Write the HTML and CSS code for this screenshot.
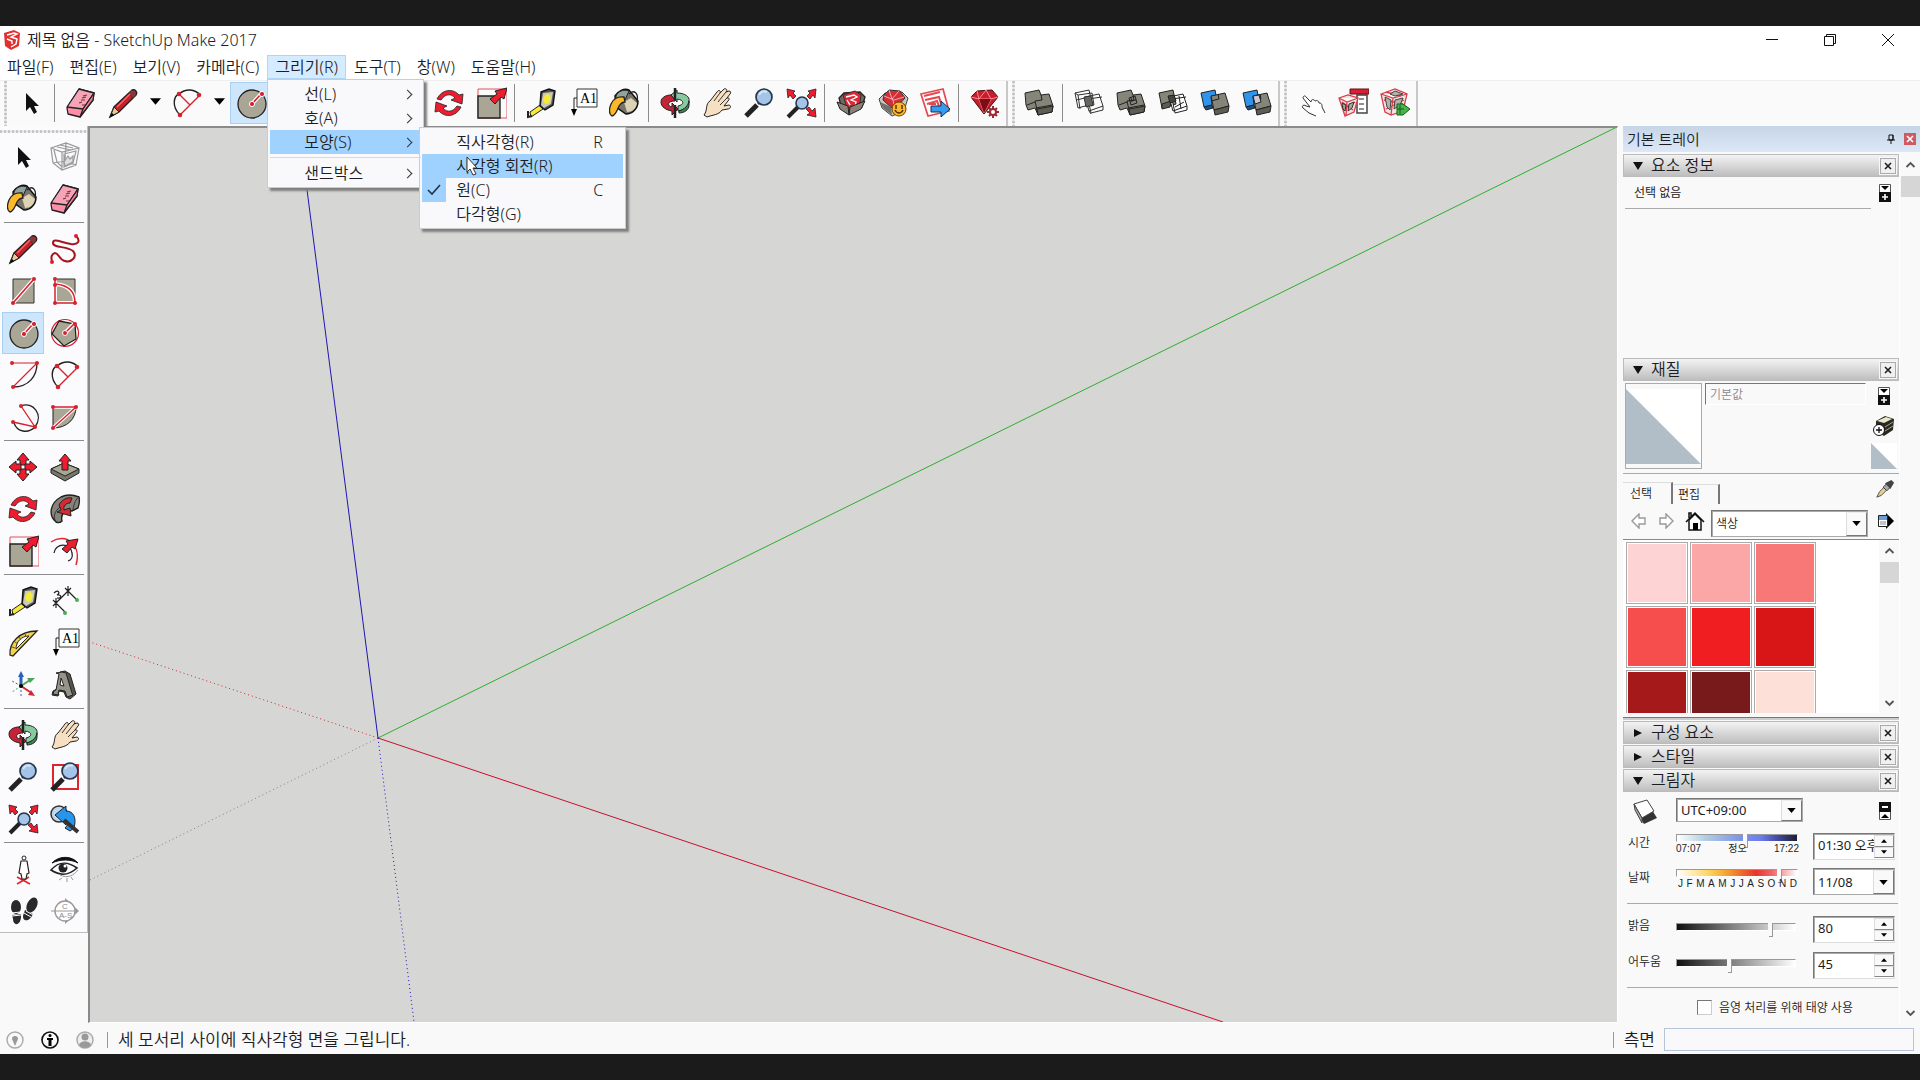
FILE: index.html
```html
<!DOCTYPE html>
<html lang="ko">
<head>
    <meta charset="UTF-8">
    <meta name="viewport" content="width=device-width, initial-scale=1.0">
    <title>제목 없음 - SketchUp Make 2017</title>
    <link rel="stylesheet" href="styles.css">
</head>
<body>
    <!-- Icon set -->
    <svg class="sprite" aria-hidden="true">
        <symbol id="select" viewBox="0 0 32 32"><path d="M11 6v18l4-4 4 7 3-2-3-6h5z" fill="#111"/></symbol>
        <symbol id="component" viewBox="0 0 32 32"><g fill="none" stroke="#999" stroke-width="1.2"><path d="M2 7 17 2l13 5-3 17-14 5-9-7zM2 7l11 4 17-4M13 11v18M5 9l3 12 5 5M17 2l-1 18 11 4M4 22l12-2M8 6l14 3M11 4l13 3M15 13l12-3-3 12-9 4z"/><path d="m15 21 4-6 2 3 3-3v6l-8 4z" fill="#ddd"/></g></symbol>
        <symbol id="bucket" viewBox="0 0 32 32"><path d="M6 9c3-5 9-8 14-6l9 11c0 8-6 13-12 13L7 20z" fill="#77746a" stroke="#111" stroke-width="1.5"/><path d="m15 15 7-4 6 5c-1 6-5 9-10 9z" fill="#ddd3b4"/><path d="M7 9c2-5 8-7 13-5l-4 9-9 4z" fill="#8fa3a0" stroke="#222"/><path d="M20 7c5-5 10-1 8 8" fill="none" stroke="#222" stroke-width="1.3"/><path d="M15 10C9 9 4 12 2 17c-2 5-2 10 1 12 4-1 5-6 7-10 2-3 4-4 6-4z" fill="#fbb829" stroke="#222" stroke-width="1.3"/></symbol>
        <symbol id="eraser" viewBox="0 0 32 32"><g stroke="#222" stroke-width="1.3" stroke-linejoin="round"><path d="m2 21 12-19 15 4-1 7-13 17-12-3z" fill="#ff8fa8"/><path d="m14 2 15 4-11 16L2 20z" fill="#f7a3b8"/><path d="m18 22-3 8 13-17 1-7z" fill="#ff7f98"/></g><path d="m14 16 3-1m-1-2 4 0m-3-2 4-1m-3-1 4-1m-5 10 3 0" stroke="#733" stroke-width="1.2"/></symbol>
        <symbol id="pencil" viewBox="0 0 32 32"><path d="M25 3c3-1 6 2 4 5L12 25l-9 5 4-10z" fill="#c3222c" stroke="#222" stroke-width="1.4"/><path d="m22 6 4 5M7 20l5 5-9 5z" fill="#e8c795" stroke="#222"/><path d="m25 3 4 5-3 3-4-5z" fill="#7d3b3b"/><path d="m10 20 13-13" stroke="#f56b6b" stroke-width="1.5"/><path d="m3 30 2-4 2 2z"/></symbol>
        <symbol id="freehand" viewBox="0 0 32 32"><path d="M27 3c5 5 2 9-5 8C11 9 4 5 4 10s14 3 20 8c5 6-2 12-8 10-6-1-6-8-10-8-4 1-4 5-3 8" fill="none" stroke="#a4151e" stroke-width="2"/><g fill="#dc1f2b"><circle cx="27" cy="3" r="2"/><circle cx="3" cy="29" r="2"/></g></symbol>
        <symbol id="rect" viewBox="0 0 32 32"><path d="M6 4h21v24H6z" fill="#a9a695" stroke="#333"/><path d="M6 28 27 4" stroke="#fff" stroke-width="4"/><path d="M6 28 27 4" stroke="#d4222e" stroke-width="1.6"/><circle cx="6" cy="28" r="2" fill="#d4222e"/><circle cx="27" cy="4" r="2" fill="#d4222e"/></symbol>
        <symbol id="rotrect" viewBox="0 0 32 32"><path d="M6 4h20v24H6z" fill="#a9a695" stroke="#333"/><path d="M6 9c14 1 20 8 20 19H6V4" fill="none" stroke="#fff" stroke-width="4"/><path d="M6 9c14 1 20 8 20 19H6V4" fill="none" stroke="#d4222e" stroke-width="1.5"/><g fill="#d4222e"><circle cx="6" cy="4" r="2"/><circle cx="6" cy="10" r="2"/><circle cx="6" cy="28" r="2"/><circle cx="26" cy="28" r="2"/></g></symbol>
        <symbol id="circle" viewBox="0 0 32 32"><circle cx="17" cy="17" r="14" fill="#a9a695" stroke="#222" stroke-width="1.3"/><path d="m17 17 9-10" stroke="#fff" stroke-width="4"/><path d="m17 17 9-10" stroke="#d4222e" stroke-width="1.6"/><circle cx="17" cy="17" r="2.600" fill="#d4222e" stroke="#fff"/><circle cx="27" cy="7" r="2.600" fill="#d4222e" stroke="#fff"/></symbol>
        <symbol id="polygon" viewBox="0 0 32 32"><circle cx="16" cy="16" r="13.500" fill="#fff" stroke="#d4222e" stroke-width="1.2"/><path d="M10 4 26 7l1 15-12 7L3 17z" fill="#a9a695" stroke="#222" stroke-width="1.3"/><path d="m16 16 9-9" stroke="#fff" stroke-width="4"/><path d="m16 16 9-9" stroke="#d4222e" stroke-width="1.6"/><circle cx="16" cy="16" r="2.500" fill="#d4222e" stroke="#fff"/><circle cx="26" cy="7" r="2" fill="#d4222e"/></symbol>
        <symbol id="arc2" viewBox="0 0 32 32"><path d="M30 4c0 13-8 24-24 24" fill="none" stroke="#222" stroke-width="1.3"/><path d="M5 4h25L6 28" fill="none" stroke="#d4222e" stroke-width="1.2"/><g fill="#d4222e"><circle cx="5" cy="4" r="2"/><circle cx="30" cy="4" r="2"/><circle cx="6" cy="28" r="2"/></g></symbol>
        <symbol id="arc" viewBox="0 0 32 32"><path d="M9 28C0 19 3 9 8 7c7-6 16-5 21 1" fill="none" stroke="#222" stroke-width="1.4"/><path d="m9 28 20-20M8 7l11 11" fill="none" stroke="#d4222e" stroke-width="1.4"/><g fill="#d4222e"><circle cx="9" cy="28" r="2.300"/><circle cx="8" cy="7" r="2.300"/><circle cx="28" cy="8" r="2.300"/></g></symbol>
        <symbol id="arc3" viewBox="0 0 32 32"><path d="M14 5c12-5 23 9 14 21-7 7-18 5-21-4" fill="none" stroke="#222" stroke-width="1.3"/><path d="m14 5 14 21L6 21" fill="none" stroke="#d4222e" stroke-width="1.3"/><g fill="#d4222e"><circle cx="14" cy="5" r="2"/><circle cx="28" cy="26" r="2"/><circle cx="6" cy="21" r="2"/></g></symbol>
        <symbol id="pie" viewBox="0 0 32 32"><path d="M4 6h23c0 12-9 21-23 21z" fill="#a9a695" stroke="#222"/><path d="M4 6h23L4 27" fill="none" stroke="#fff" stroke-width="3.500"/><path d="M4 6h23L4 27" fill="none" stroke="#d4222e" stroke-width="1.4"/><g fill="#d4222e"><circle cx="4" cy="6" r="2"/><circle cx="27" cy="6" r="2"/><circle cx="4" cy="27" r="2"/></g></symbol>
        <symbol id="move" viewBox="0 0 32 32"><path id="up" d="m16 2 6 7h-3v5h-6V9h-3z" fill="#ed1c2e" stroke="#222" stroke-width="1"/><use href="#up" transform="rotate(90 16 16)"/><use href="#up" transform="rotate(180 16 16)"/><use href="#up" transform="rotate(270 16 16)"/></symbol>
        <symbol id="pushpull" viewBox="0 0 32 32"><path d="m2 18 13-6 15 6v4l-14 8-14-8z" fill="#77766b" stroke="#222"/><path d="m2 18 14 7 14-7-15-6z" fill="#a9a695" stroke="#222"/><path d="m16 3 6 7h-3v9h-6v-9h-3z" fill="#ed1c2e" stroke="#222"/></symbol>
        <symbol id="rotate" viewBox="0 0 32 32"><g id="rot" fill="#ed1c2e" stroke="#222" stroke-width=".8"><path d="M4 12C9 2 20 1 26 8l4-1-1 10-11-4 4-2c-4-5-10-4-14 2z"/></g><use href="#rot" transform="rotate(180 16 16)"/></symbol>
        <symbol id="followme" viewBox="0 0 32 32"><path d="M7 29C-1 22 1 10 12 4c6-3 13-2 18 0 1 4 0 8-1 11l-6 3C17 17 11 20 13 28c-2 2-4 2-6 1z" fill="#85837a" stroke="#222" stroke-width="1.4"/><path d="M7 29c-3-5-2-10 4-15M30 4c-3 2-5 6-6 13" fill="none" stroke="#333"/><path d="M10 12C13 6 19 4 23 5l-2 5c-4 0-7 3-6 7l6-2 1 8-14-4 4-2z" fill="#d42a30" stroke="#222"/></symbol>
        <symbol id="scale" viewBox="0 0 32 32"><path d="M3 2h29v29H3z" fill="none" stroke="#e0525c"/><path d="M3 9h22v22H3z" fill="#a9a695" stroke="#222" stroke-width="1.4"/><path d="m32 1-3 11-3-2-6 7-5-5 7-5-2-3z" fill="#ed1c2e" stroke="#222"/></symbol>
        <symbol id="offset" viewBox="0 0 32 32"><path d="M2 7c15-10 31 3 25 23" fill="none" stroke="#e2242d" stroke-width="1.5"/><path d="M5 18c1-10 17-11 18 0 1 4-1 7-4 8" fill="none" stroke="#222" stroke-width="1.3"/><path d="m29 4-3 10-3-2-5 6-5-4 6-5-2-3z" fill="#ed1c2e" stroke="#222"/></symbol>
        <symbol id="tape" viewBox="0 0 32 32"><path d="m5 25 10-7 3 4L6 30z" fill="#f6e83b" stroke="#222"/><path d="M3 24v6l4-1" stroke="#222" stroke-width="2" fill="none"/><path d="m16 5 8-3 6 2-2 14-8 5-5-4z" fill="#555" stroke="#111" stroke-width="1.4"/><path d="m18 6 10-1-2 12-7 4-3-3z" fill="#c9c9be"/><ellipse cx="22" cy="12" rx="3.500" ry="5" fill="#f4ec35" transform="rotate(15 22 12)"/></symbol>
        <symbol id="dimension" viewBox="0 0 32 32"><path d="M7 18 19 6M7 18l9 9M19 6l9 9M4 15l6 6m-6 0 6-6m-3-2v10M16 3l6 6m-6 0 6-6m-3-2v10M5 8c4-4 7 0 3 2 5-1 5 4 0 3" fill="none" stroke="#222" stroke-width="1.2"/><circle cx="16" cy="28" r="2" fill="#4cab59"/><circle cx="28" cy="15" r="2" fill="#4cab59"/></symbol>
        <symbol id="protractor" viewBox="0 0 32 32"><path d="M3 28C2 16 12 4 30 4L6 29z" fill="#f0d351" stroke="#222" stroke-width="1.3"/><path d="M9 22c0-7 5-13 13-13z" fill="#fff" stroke="#222"/><path d="m5 20 3 1m0-6 3 2m1-7 2 3m4-6 1 3" stroke="#6f5b12"/></symbol>
        <symbol id="axes" viewBox="0 0 32 32"><path d="M14 17V7" stroke="#2b62b5" stroke-width="3"/><path d="m14 2 3 6h-6z" fill="#2b62b5"/><path d="m14 17 9-6" stroke="#4fa45b" stroke-width="2"/><path d="m28 9-5 5-3-5z" fill="#4fa45b"/><path d="m14 17 9 6" stroke="#cf2a30" stroke-width="2"/><path d="m28 27-7-1 3-5z" fill="#cf2a30"/><path d="m14 17-9-5" stroke="#cf2a30" stroke-dasharray="2"/><path d="M14 17v11" stroke="#2b62b5" stroke-dasharray="2"/><path d="m14 17-9 6" stroke="#4fa45b" stroke-dasharray="2"/><circle cx="14" cy="17" r="2"/></symbol>
        <symbol id="text3d" viewBox="0 0 32 32"><path d="m11 3 5-1 5 3 6 20-6 5-4-2-2-5-5-1-1 5-6-1 1-4 4-2z" fill="#55554e" stroke="#222"/><path d="m7 4 6-1 4 1 6 20 1 2-6 2-2-6-6-1-1 3 1 2-6-1 1-3 2-1 3-16z" fill="#95938a" stroke="#222"/><path d="m12 9-1 7 4 1z" fill="#fafafa" stroke="#222"/></symbol>
        <symbol id="orbit" viewBox="0 0 32 32"><g stroke="#222" stroke-width="1"><path d="M17 8C8 7 2 10 2 15c0 5 5 8 11 9v4l6-6-6-6v4c-5-1-5-6 3-6z" fill="#c52436"/><path d="M12 8 18 3v3c8 0 13 4 12 8 0 6-5 9-11 10v-5c6-1 7-6-1-7v3z" fill="#87caa0"/><path d="m30 14v4c0 5-5 8-10 8v-2c6-2 9-5 10-10z" fill="#3b8653"/></g><path d="M16 1v12m0 5v13" stroke="#222" stroke-width="2.500"/></symbol>
        <symbol id="pan" viewBox="0 0 32 32"><path d="M3 28c4-5 1-11 6-14l7-9c2-3 4-1 3 1l4-4c2-1 4 1 2 3l3-1c2 0 2 2 1 3l-3 4c2-1 3 1 1 3l-4 5 5-1c3 1 1 4-1 4l-6 1c-3 5-10 5-15 7z" fill="#f7dfc1" stroke="#222" stroke-width="1"/><path d="m19 6-6 8m12-9-8 10m10-5-8 8" stroke="#222" stroke-width=".9"/></symbol>
        <symbol id="zoom" viewBox="0 0 32 32"><path d="M3 29 14 18" stroke="#222" stroke-width="5"/><path d="m15 17 3-3" stroke="#333" stroke-width="2.500"/><circle cx="21" cy="10" r="8" fill="#a4c4e8" stroke="#27364d" stroke-width="1.7"/><path d="M16 8c2-4 6-4 8-3" stroke="#d5e5f5" fill="none" stroke-width="2"/></symbol>
        <symbol id="zoomwin" viewBox="0 0 32 32"><path d="M4 4h25v24H4z" fill="none" stroke="#dd2530" stroke-width="2"/><use href="#zoom"/></symbol>
        <symbol id="extents" viewBox="0 0 32 32"><path d="M3 30 13 20" stroke="#222" stroke-width="4"/><circle cx="17" cy="16" r="6" fill="#a4c4e8" stroke="#27364d" stroke-width="1.6"/><path d="m2 2 8 2-2 2 3 3-3 3-3-4-2 3zM31 2l-8 2 2 2-3 3 3 3 3-4 2 3zM31 30l-9-2 3-2-4-4 3-2 3 4 3-3z" fill="#ed1c2e" stroke="#222" stroke-width=".8"/></symbol>
        <symbol id="previous" viewBox="0 0 32 32"><circle cx="10" cy="11" r="8" fill="#c1d7ed" stroke="#333" stroke-width="1.5"/><path d="m6 12 11-9v5c7 0 11 6 8 17l-4 3-5-3c3-3 4-6 1-8v5z" fill="#2695ee" stroke="#222"/><path d="m15 17 14 12" stroke="#333" stroke-width="4"/></symbol>
        <symbol id="camera" viewBox="0 0 32 32"><path d="m10 24 13 7m-13 0 12-7" stroke="#e2242d" stroke-width="1.5"/><circle cx="17" cy="5" r="2" fill="#fff" stroke="#222"/><path d="M14 8h6l2 12-2 1-1 5h-4l-1-5-2-1z" fill="#fff" stroke="#222" stroke-width="1.2"/></symbol>
        <symbol id="look" viewBox="0 0 32 32"><path d="M3 10C11 2 23 3 29 10 22 6 11 6 3 10z" fill="#111" stroke="#111"/><path d="M2 17c8-9 16-9 26-2-10 9-18 7-26 2z" fill="#fff" stroke="#222" stroke-width="1.6"/><circle cx="14" cy="15" r="4.500" fill="#222"/><circle cx="16" cy="13" r="1.500" fill="#fff"/><path d="M11 22c8 4 14 0 18-5m-16 8-3 2m8-2v4m4-5 2 3" stroke="#999" fill="none"/></symbol>
        <symbol id="walk" viewBox="0 0 32 32"><g fill="#292929"><ellipse cx="9" cy="12" rx="5" ry="7"/><path d="m5 20 9-1c1 12-8 13-8 5z"/><ellipse cx="25" cy="10" rx="5" ry="8" transform="rotate(25 25 10)"/><path d="m18 15 8 4c-4 10-13 7-9-1z"/></g><path d="m4 18 10-1m-9 4 9-1m5-4 7 4m-9-2 7 4" stroke="#fff" stroke-width="1"/></symbol>
        <symbol id="warehouse" viewBox="0 0 32 32"><path d="m4 11 5-5 16-1 5 5-3 10-12 6-9-7z" fill="#716963" stroke="#222" stroke-width="1.3"/><path d="m8 8 12-4 6 4-2 14-11 3z" fill="#df2834" stroke="#333"/><path d="m11 10 8-2 3 2-6 3 5 2-1 5-5 1m-3-8 3 5" fill="none" stroke="#fff" stroke-width="1.3"/><path d="m2 15 11 4 1 9-9-6zM30 14l-15 6-1 8 12-6z" fill="#8b8179" stroke="#222"/></symbol>
        <symbol id="extension" viewBox="0 0 32 32"><path d="m2 12 6-6 17-1 6 6-4 13-12 5-10-8z" fill="#c9c5c0" stroke="#444"/><path d="m7 8 5-5 11 1 5 7-11 12-11-10z" fill="#d52d35" stroke="#333"/><path d="m7 9 10 4 10-3M12 3l3 9 7-8m-6 9 2 10" stroke="#fff" fill="none" opacity=".6"/><path d="m3 15 11 5 1 8-9-7z" fill="#72706d"/><circle cx="22" cy="22" r="7" fill="#ffb729" stroke="#6b4306"/><path d="M19 18v4m6-4v4m-7 1c2 4 6 4 8 0" fill="none" stroke="#53360b" stroke-width="1.5"/></symbol>
        <symbol id="layout" viewBox="0 0 32 32"><path d="m2 7 22-5 6 22-21 5z" fill="#fff" stroke="#e64852" stroke-width="1.7"/><path d="m5 9 16-4m-15 8 14-3 4 13m-16-6 10-3 3 8m-11-5 7 0" fill="none" stroke="#e64852" stroke-width="2"/><path d="M12 19h10v-5l9 8-9 8v-5H12z" fill="#359cf0" stroke="#14304e"/></symbol>
        <symbol id="ruby" viewBox="0 0 32 32"><path d="m2 10 6-6 15-1 6 7-14 17z" fill="#c81e2c" stroke="#401015"/><path d="m2 10 8 2 7-9 5 9 7-2M10 12l5 14 7-14zM8 4l2 8" fill="none" stroke="#ff8d92"/><path d="m10 12 5 14 7-14z" fill="#7c0d17"/><path d="M24 19v12m-6-6h12m-10-4 8 8m0-8-8 8" stroke="#9c2830" stroke-width="2"/><circle cx="24" cy="25" r="4" fill="#9c2830"/><circle cx="24" cy="25" r="2" fill="#fff"/></symbol>
        <!-- two overlapping solids -->
        <symbol id="shell" viewBox="0 0 32 32"><g stroke="#222" stroke-width="1" fill="#85857a"><path d="m2 6 14-3 2 5 8-1 4 12-1 6-14 3-3-7-7 2-2-5z"/><path d="m12 14 7-1-1-5m-6 6 2 9m-1-2 16-3m-25 0 8-3M15 28l-1-6" fill="none"/><path d="m14 22 16-3-1 6-14 3z" fill="#5d5d54"/></g></symbol>
        <symbol id="intersect" viewBox="0 0 32 32"><g stroke="#333" fill="none"><path d="m2 6 14-3 3 14-14 4zm0 0 3 2 14-2 2 12-3 1M5 8l2 14M3 13l14-3M12 10l14-3 4 12-14 5zm0 0 3 2 14-2M15 12l3 14 12-3v-4M16 24l2 3"/><path d="m11 10 7-1 2 9-7 2z" fill="#66665f"/></g></symbol>
        <symbol id="union" viewBox="0 0 32 32"><use href="#shell"/><path d="m14 11 6-2 2 7-6 2zm2 0 1 4m-2-1 6-1" fill="none" stroke="#222"/></symbol>
        <symbol id="subtract" viewBox="0 0 32 32"><g stroke="#222" fill="#85857a"><path d="m2 6 14-3 3 14-14 4z"/><path d="m5 17 9-3-1 6-8 2z" fill="#5d5d54"/><path d="m12 10 14-3 4 12-14 5zm0 0 3 2 14-2M15 12l3 14 12-3v-4M18 20l9-5M22 9l2 13" fill="#fff"/><path d="m11 9 6-1 2 6-6 2z" fill="#44443e"/></g></symbol>
        <symbol id="trim" viewBox="0 0 32 32"><g stroke="#222"><path d="m2 6 14-3 1 5-5 2 1 8-8 2z" fill="#2f94ee"/><path d="m5 20 8-2 1 3-7 2z" fill="#13538e"/><path d="m12 9 14-3 4 13-15 4z" fill="#85857a"/><path d="m15 23 15-4-1 6-13 3z" fill="#5d5d54"/><path d="m12 14 8-2-1-5" fill="none"/></g></symbol>
        <symbol id="split" viewBox="0 0 32 32"><use href="#trim"/><path d="m12 9 6-1 2 7-6 2z" fill="#ccc9d4" stroke="#222"/></symbol>
        <symbol id="interact" viewBox="0 0 32 32"><path d="m21 29-7-3-6-5c-2-2 1-4 3-2l4 1-7-9c0-2 2-3 3-1l5 5c0-3 3-3 4-1 2-1 4 0 4 2 3 0 3 2 3 4l3 6" fill="#fff" stroke="#333"/></symbol>
        <symbol id="options" viewBox="0 0 32 32"><path d="M20 8h10v18H20z" fill="#fff" stroke="#444" stroke-width="1.5"/><path d="M13 2h19v5H13z" fill="#d71f35" stroke="#661019"/><path d="M22 12h5m-5 5h5m-5 5h5" stroke="#222"/><g fill="#f1e5e2" stroke="#db3c49" stroke-width="1.3"><path d="m2 11 9-3 10 3-4 14-9 4zM2 11l8 4 11-4M10 15l-1 13M5 15l11 8m-10 0 12-8"/></g><path d="m5 16 4 2-1 6-2-2zm7 1 5-2-2 6-4 3z" fill="#aaa29d" stroke="#333"/></symbol>
        <symbol id="attributes" viewBox="0 0 32 32"><g fill="#f1e5e2" stroke="#db3c49" stroke-width="1.3"><path d="m2 7 14-5 12 5-4 17-12 4-6-3zM2 7l12 4 14-4M14 11l-2 17M5 13l19 4M7 22l18-9M7 5l15 4"/></g><path d="m6 10 6 3-1 10-3-3zm10-6 8 3-8 2-5-2zM16 13l8-2-3 7-6 4z" fill="#b8b1ab" stroke="#444"/><path d="M18 17h6l7 5-7 6h-6z" fill="#45b648" stroke="#1b5821"/><path d="M18 22h7m-4-4v9" stroke="#1b5821"/></symbol>
        <symbol id="details" viewBox="0 0 12 18"><path d="M.5.500h11v17H.500z" fill="#fff" stroke="#555"/><path d="M2 2h8L6 6z"/><path d="M0 8h12v10H0z" fill="#111"/><path d="M3 13h6M6 10v6" stroke="#fff" stroke-width="1.6"/></symbol>
        <symbol id="x" viewBox="0 0 10 10"><path d="m2 2 6 6M8 2 2 8" stroke="currentColor" stroke-width="1.6"/></symbol>
        <symbol id="down" viewBox="0 0 10 6"><path d="M0 0h10L5 6z"/></symbol>
        <symbol id="chev" viewBox="0 0 10 10"><path d="m1 7 4-4 4 4" fill="none" stroke="#555" stroke-width="1.8"/></symbol>
    </svg>

    <div class="app">
        <header class="titlebar">
            <svg class="logo" viewBox="0 0 18 20"><path d="m1 3 10-3 6 3-1 13-8 4-6-4z" fill="#e0302f"/><path d="m4 5 7-2 3 1-6 3 6 2-1 5-5 3M4 9l5 2v3" fill="none" stroke="#fff" stroke-width="1.4"/></svg>
            <h1>제목 없음 - SketchUp Make 2017</h1>
            <div class="window-buttons">
                <button aria-label="최소화"><svg viewBox="0 0 12 12"><path d="M0 5.500h12" stroke="#111"/></svg></button>
                <button aria-label="복원"><svg viewBox="0 0 12 12"><path d="M.5 2.500h9v9h-9zM2.500 2.500v-2h9v9h-2" fill="none" stroke="#111"/></svg></button>
                <button aria-label="닫기"><svg viewBox="0 0 12 12"><path d="m0 0 12 12M12 0 0 12" stroke="#111"/></svg></button>
            </div>
        </header>

        <nav class="menubar">
            <button>파일(F)</button>
            <button>편집(E)</button>
            <button>보기(V)</button>
            <button>카메라(C)</button>
            <div class="menu-open">
                <button class="active">그리기(R)</button>
                <ul class="menu">
                    <li><button>선(L)<i class="more"></i></button></li>
                    <li><button>호(A)<i class="more"></i></button></li>
                    <li>
                        <button class="active">모양(S)<i class="more"></i></button>
                        <ul class="menu submenu">
                            <li><button>직사각형(R)<kbd>R</kbd></button></li>
                            <li><button class="active">사각형 회전(R)</button></li>
                            <li><button class="checked"><svg class="check" viewBox="0 0 24 24"><path d="m6 12 4 4 8-9" fill="none" stroke="#234" stroke-width="1.6"/></svg>원(C)<kbd>C</kbd></button></li>
                            <li><button>다각형(G)</button></li>
                        </ul>
                    </li>
                    <li class="divider"><button>샌드박스<i class="more"></i></button></li>
                </ul>
                <svg class="pointer" viewBox="0 0 12 20"><path d="M1 1v15l3-3 3 6 3-1-3-6h4z" fill="#fff" stroke="#333"/></svg>
            </div>
            <button>도구(T)</button>
            <button>창(W)</button>
            <button>도움말(H)</button>
        </nav>

        <div class="toolbars">
            <div class="toolbar">
                <button class="tool" aria-label="선택"><svg><use href="#select"/></svg></button>
                <hr>
                <button class="tool" aria-label="지우기"><svg><use href="#eraser"/></svg></button>
                <button class="tool" aria-label="선"><svg><use href="#pencil"/></svg></button>
                <button class="drop" aria-label="선 도구"><svg><use href="#down"/></svg></button>
                <button class="tool" aria-label="호"><svg><use href="#arc"/></svg></button>
                <button class="drop" aria-label="호 도구"><svg><use href="#down"/></svg></button>
                <button class="tool on" aria-label="원"><svg><use href="#circle"/></svg></button>
                <button class="drop" aria-label="모양 도구"><svg><use href="#down"/></svg></button>
                <hr>
                <button class="tool" aria-label="밀기/끌기"><svg><use href="#pushpull"/></svg></button>
                <button class="tool" aria-label="오프셋"><svg><use href="#offset"/></svg></button>
                <button class="tool" aria-label="이동"><svg><use href="#move"/></svg></button>
                <button class="tool" aria-label="회전"><svg><use href="#rotate"/></svg></button>
                <button class="tool" aria-label="배율"><svg><use href="#scale"/></svg></button>
                <hr>
                <button class="tool" aria-label="줄자"><svg><use href="#tape"/></svg></button>
                <button class="tool" aria-label="텍스트"><svg viewBox="0 0 32 32"><path d="M10 2h20v18H10z" fill="#fff" stroke="#333"/><path d="M10 11H7v12" fill="none" stroke="#222"/><path d="M4 22h6l-3 7z"/><text x="13" y="16" class="a1">A1</text></svg></button>
                <button class="tool" aria-label="페인트통"><svg><use href="#bucket"/></svg></button>
                <hr>
                <button class="tool" aria-label="궤도"><svg><use href="#orbit"/></svg></button>
                <button class="tool" aria-label="이동 보기"><svg><use href="#pan"/></svg></button>
                <button class="tool" aria-label="확대/축소"><svg><use href="#zoom"/></svg></button>
                <button class="tool" aria-label="범위 확대"><svg><use href="#extents"/></svg></button>
                <hr>
                <button class="tool" aria-label="3D Warehouse"><svg><use href="#warehouse"/></svg></button>
                <button class="tool" aria-label="Extension Warehouse"><svg><use href="#extension"/></svg></button>
                <button class="tool" aria-label="LayOut"><svg><use href="#layout"/></svg></button>
                <hr>
                <button class="tool" aria-label="확장 관리자"><svg><use href="#ruby"/></svg></button>
            </div>
            <div class="toolbar">
                <button class="tool" aria-label="외곽 쉘"><svg><use href="#shell"/></svg></button>
                <hr>
                <button class="tool" aria-label="교차"><svg><use href="#intersect"/></svg></button>
                <button class="tool" aria-label="결합"><svg><use href="#union"/></svg></button>
                <button class="tool" aria-label="빼기"><svg><use href="#subtract"/></svg></button>
                <button class="tool" aria-label="자르기"><svg><use href="#trim"/></svg></button>
                <button class="tool" aria-label="분할"><svg><use href="#split"/></svg></button>
            </div>
            <div class="toolbar">
                <button class="tool" aria-label="상호 작용"><svg><use href="#interact"/></svg></button>
                <button class="tool" aria-label="구성 요소 옵션"><svg><use href="#options"/></svg></button>
                <button class="tool" aria-label="구성 요소 속성"><svg><use href="#attributes"/></svg></button>
            </div>
        </div>

        <main class="workspace">
            <aside class="side">
                <div class="toolbox">
                    <button class="tool" aria-label="선택"><svg><use href="#select"/></svg></button>
                    <button class="tool" aria-label="구성 요소 만들기"><svg><use href="#component"/></svg></button>
                    <button class="tool" aria-label="페인트통"><svg><use href="#bucket"/></svg></button>
                    <button class="tool" aria-label="지우기"><svg><use href="#eraser"/></svg></button>
                    <hr>
                    <button class="tool" aria-label="선"><svg><use href="#pencil"/></svg></button>
                    <button class="tool" aria-label="자유곡선"><svg><use href="#freehand"/></svg></button>
                    <button class="tool" aria-label="직사각형"><svg><use href="#rect"/></svg></button>
                    <button class="tool" aria-label="사각형 회전"><svg><use href="#rotrect"/></svg></button>
                    <button class="tool on" aria-label="원"><svg><use href="#circle"/></svg></button>
                    <button class="tool" aria-label="다각형"><svg><use href="#polygon"/></svg></button>
                    <button class="tool" aria-label="2점 호"><svg><use href="#arc2"/></svg></button>
                    <button class="tool" aria-label="호"><svg><use href="#arc"/></svg></button>
                    <button class="tool" aria-label="3점 호"><svg><use href="#arc3"/></svg></button>
                    <button class="tool" aria-label="파이"><svg><use href="#pie"/></svg></button>
                    <hr>
                    <button class="tool" aria-label="이동"><svg><use href="#move"/></svg></button>
                    <button class="tool" aria-label="밀기/끌기"><svg><use href="#pushpull"/></svg></button>
                    <button class="tool" aria-label="회전"><svg><use href="#rotate"/></svg></button>
                    <button class="tool" aria-label="따라가기"><svg><use href="#followme"/></svg></button>
                    <button class="tool" aria-label="배율"><svg><use href="#scale"/></svg></button>
                    <button class="tool" aria-label="오프셋"><svg><use href="#offset"/></svg></button>
                    <hr>
                    <button class="tool" aria-label="줄자"><svg><use href="#tape"/></svg></button>
                    <button class="tool" aria-label="치수"><svg><use href="#dimension"/></svg></button>
                    <button class="tool" aria-label="각도기"><svg><use href="#protractor"/></svg></button>
                    <button class="tool" aria-label="텍스트"><svg viewBox="0 0 32 32"><path d="M10 2h20v18H10z" fill="#fff" stroke="#333"/><path d="M10 11H7v12" fill="none" stroke="#222"/><path d="M4 22h6l-3 7z"/><text x="13" y="16" class="a1">A1</text></svg></button>
                    <button class="tool" aria-label="축"><svg><use href="#axes"/></svg></button>
                    <button class="tool" aria-label="3D 텍스트"><svg><use href="#text3d"/></svg></button>
                    <hr>
                    <button class="tool" aria-label="궤도"><svg><use href="#orbit"/></svg></button>
                    <button class="tool" aria-label="이동 보기"><svg><use href="#pan"/></svg></button>
                    <button class="tool" aria-label="확대/축소"><svg><use href="#zoom"/></svg></button>
                    <button class="tool" aria-label="창 확대"><svg><use href="#zoomwin"/></svg></button>
                    <button class="tool" aria-label="범위 확대"><svg><use href="#extents"/></svg></button>
                    <button class="tool" aria-label="이전"><svg><use href="#previous"/></svg></button>
                    <hr>
                    <button class="tool" aria-label="카메라 배치"><svg><use href="#camera"/></svg></button>
                    <button class="tool" aria-label="둘러보기"><svg><use href="#look"/></svg></button>
                    <button class="tool" aria-label="걷기"><svg><use href="#walk"/></svg></button>
                    <button class="tool" aria-label="단면"><svg viewBox="0 0 32 32"><path d="m16 3 14 13-14 13z" fill="#999"/><circle cx="16" cy="16" r="10" fill="#fff" stroke="#999" stroke-width="1.4"/><path d="M2 16h26" stroke="#999"/><text x="13" y="14" class="mark">C</text><text x="10" y="23" class="mark">A-S</text></svg></button>
                </div>
            </aside>

            <section class="viewport">
                <svg viewBox="0 0 1527 894" preserveAspectRatio="xMinYMin slice">
                    <g fill="none" stroke-width="1">
                        <path d="M288 610 1527-1" stroke="#2fae2f"/>
                        <path d="M288 610 1133 894" stroke="#c8102e"/>
                        <path d="M288 610 209 0" stroke="#2015b4"/>
                        <path d="M288 610 0 752" stroke="#6f8f6f" stroke-dasharray="1 3"/>
                        <path d="M288 610 0 514" stroke="#d8202a" stroke-dasharray="1 3"/>
                        <path d="M288 610 324 894" stroke="#2015b4" stroke-dasharray="1 3"/>
                    </g>
                </svg>
            </section>

            <aside class="tray">
                <div class="tray-title">
                    <h2>기본 트레이</h2>
                    <button aria-label="고정"><svg viewBox="0 0 10 12"><path d="M3 2h4v5H3zM1 7h8M5 7v4M7 2v5" fill="none" stroke="#111"/></svg></button>
                    <button class="close" aria-label="트레이 닫기"><svg><use href="#x"/></svg></button>
                </div>
                <div class="tray-body">
                    <div class="panels">
                        <h3 class="panel-head open"><i></i>요소 정보<button aria-label="닫기"><svg><use href="#x"/></svg></button></h3>
                        <div class="info">
                            <p>선택 없음</p>
                            <button class="details" aria-label="세부 정보"><svg><use href="#details"/></svg></button>
                        </div>

                        <h3 class="panel-head open"><i></i>재질<button aria-label="닫기"><svg><use href="#x"/></svg></button></h3>
                        <div class="materials">
                            <div class="current">
                                <div class="preview"><svg viewBox="0 0 75 84"><path d="M0 5h75v75H0z" fill="#fff"/><path d="m0 5 75 75H0z" fill="#b1bec7"/></svg></div>
                                <input type="text" class="name" value="기본값" aria-label="재질 이름" disabled>
                                <div class="current-icons">
                                    <button class="details" aria-label="보조 창"><svg><use href="#details"/></svg></button>
                                    <button class="create" aria-label="재질 만들기"><svg viewBox="0 0 22 22"><path d="m3 6 9-5 9 3-1 11-9 6-8-5z" fill="#292923"/><path d="m4 6 9-4 6 2-8 4z" fill="#e9e6c9"/><path d="m12 12 8-5m-8 9 8-5" stroke="#aaa68b"/><circle cx="6" cy="15" r="5.500" fill="#fff" stroke="#111"/><path d="M3 15h6m-3-3v6" stroke="#111" stroke-width="1.3"/></svg></button>
                                    <button class="default" aria-label="기본 재질"><svg viewBox="0 0 26 26"><path d="M0 0h26v26H0z" fill="#fff"/><path d="m0 0 26 26H0z" fill="#b1bec7"/></svg></button>
                                </div>
                            </div>
                            <div class="tabs">
                                <button class="tab selected">선택</button>
                                <button class="tab">편집</button>
                                <button class="dropper" aria-label="추출"><svg viewBox="0 0 22 22"><path d="m2 20 3-6 7-7 3 3-8 8z" fill="#e8cf91" stroke="#444"/><path d="m9 9 4-4 4 4-4 4z" fill="#aaa" stroke="#333"/><path d="m12 4 6-3 3 3-3 5-1 2-6-6z" fill="#444"/></svg></button>
                            </div>
                            <div class="browse">
                                <button aria-label="뒤로"><svg viewBox="0 0 16 16"><path d="m1 8 7-7v4h6v6H8v4z" fill="#fff" stroke="#999" stroke-width="1.4"/></svg></button>
                                <button aria-label="앞으로"><svg viewBox="0 0 16 16"><path d="m15 8-7-7v4H2v6h6v4z" fill="#fff" stroke="#999" stroke-width="1.4"/></svg></button>
                                <button class="home" aria-label="모델에서"><svg viewBox="0 0 20 20"><path d="M4 9v10h12V9l-6-6z" fill="#fff" stroke="#111" stroke-width="1.5"/><path d="m1 11 9-9 9 9M4 7V2h2v4" fill="none" stroke="#111" stroke-width="1.5"/><path d="M8 12h5v7H8z"/></svg></button>
                                <span class="combo">
                                    <select aria-label="재질 모음"><option>색상</option></select>
                                    <i><svg><use href="#down"/></svg></i>
                                </span>
                                <button class="more-menu" aria-label="세부 정보"><svg viewBox="0 0 18 18"><path d="m9 1 8 8-8 8z"/><path d="M1.500 3.500h9v11h-9z" fill="#fff" stroke="#222"/><path d="M2 4h8v4H2z" fill="#6c9bd8"/><path d="M3 10h6m-6 2h6" stroke="#888"/></svg></button>
                            </div>
                            <div class="palette">
                                <div class="swatches">
                                    <button class="s1" aria-label="색상 1"></button>
                                    <button class="s2" aria-label="색상 2"></button>
                                    <button class="s3" aria-label="색상 3"></button>
                                    <button class="s4" aria-label="색상 4"></button>
                                    <button class="s5" aria-label="색상 5"></button>
                                    <button class="s6" aria-label="색상 6"></button>
                                    <button class="s7" aria-label="색상 7"></button>
                                    <button class="s8" aria-label="색상 8"></button>
                                    <button class="s9" aria-label="색상 9"></button>
                                </div>
                                <div class="scrollbar">
                                    <svg><use href="#chev"/></svg>
                                    <span></span>
                                    <svg class="flip"><use href="#chev"/></svg>
                                </div>
                            </div>
                        </div>

                        <h3 class="panel-head"><i></i>구성 요소<button aria-label="닫기"><svg><use href="#x"/></svg></button></h3>
                        <h3 class="panel-head"><i></i>스타일<button aria-label="닫기"><svg><use href="#x"/></svg></button></h3>
                        <h3 class="panel-head open"><i></i>그림자<button aria-label="닫기"><svg><use href="#x"/></svg></button></h3>
                        <div class="shadows">
                            <div class="row">
                                <button class="cube" aria-label="그림자 표시"><svg viewBox="0 0 26 26"><path d="m6 15 14-4 5 8-13 6z" fill="#333"/><path d="m2 5 13-4 7 11-12 7z" fill="#fff" stroke="#444"/><path d="m2 5 8 14v5L3 11z" fill="#aaa" stroke="#444"/></svg></button>
                                <span class="combo">
                                    <select aria-label="시간대"><option>UTC+09:00</option></select>
                                    <i><svg><use href="#down"/></svg></i>
                                </span>
                                <button class="details flip" aria-label="간단히"><svg viewBox="0 0 12 18"><path d="M.5.500h11v17H.500z" fill="#fff" stroke="#555"/><path d="M2 2h8L6 6z"/><path d="M0 8h12v10H0z" fill="#111"/><path d="M3 13h6" stroke="#fff" stroke-width="2"/></svg></button>
                            </div>
                            <div class="row">
                                <label for="time">시간</label>
                                <div class="slider">
                                    <input type="range" id="time" class="time" value="57">
                                    <div class="ticks"><span>07:07</span><span>정오</span><span>17:22</span></div>
                                </div>
                                <span class="spin">
                                    <input type="text" value="01:30 오후" aria-label="시간 값">
                                    <span><button aria-label="늘리기"><svg class="flip"><use href="#down"/></svg></button><button aria-label="줄이기"><svg><use href="#down"/></svg></button></span>
                                </span>
                            </div>
                            <div class="row">
                                <label for="date">날짜</label>
                                <div class="slider">
                                    <input type="range" id="date" class="date" value="86">
                                    <div class="ticks months"><span>J</span><span>F</span><span>M</span><span>A</span><span>M</span><span>J</span><span>J</span><span>A</span><span>S</span><span>O</span><span>N</span><span>D</span></div>
                                </div>
                                <span class="combo">
                                    <select aria-label="날짜 값"><option>11/08</option></select>
                                    <i><svg><use href="#down"/></svg></i>
                                </span>
                            </div>
                            <div class="row ruled">
                                <label for="light">밝음</label>
                                <div class="slider"><input type="range" id="light" class="gray" value="80"></div>
                                <span class="spin">
                                    <input type="text" value="80" aria-label="밝음 값">
                                    <span><button aria-label="늘리기"><svg class="flip"><use href="#down"/></svg></button><button aria-label="줄이기"><svg><use href="#down"/></svg></button></span>
                                </span>
                            </div>
                            <div class="row">
                                <label for="dark">어두움</label>
                                <div class="slider"><input type="range" id="dark" class="gray" value="44"></div>
                                <span class="spin">
                                    <input type="text" value="45" aria-label="어두움 값">
                                    <span><button aria-label="늘리기"><svg class="flip"><use href="#down"/></svg></button><button aria-label="줄이기"><svg><use href="#down"/></svg></button></span>
                                </span>
                            </div>
                            <label class="sun"><input type="checkbox">음영 처리를 위해 태양 사용</label>
                        </div>
                    </div>
                    <div class="scrollbar">
                        <svg><use href="#chev"/></svg>
                        <span></span>
                        <svg class="flip"><use href="#chev"/></svg>
                    </div>
                </div>
            </aside>
        </main>

        <footer class="statusbar">
            <button aria-label="지리적 위치"><svg viewBox="0 0 18 18"><circle cx="9" cy="9" r="8" fill="none" stroke="#aaa" stroke-width="1.4"/><path d="M9 15 6 8a3 3 0 1 1 6 0z" fill="#999"/></svg></button>
            <button aria-label="제작자"><svg viewBox="0 0 18 18"><circle cx="9" cy="9" r="8" fill="none" stroke="#111" stroke-width="1.6"/><circle cx="9" cy="4.500" r="1.500"/><path d="M6 7h6v2h-1.500v6h-3V9H6z"/></svg></button>
            <button aria-label="로그인"><svg viewBox="0 0 18 18"><circle cx="9" cy="9" r="8" fill="#eee" stroke="#aaa" stroke-width="1.4"/><circle cx="9" cy="6" r="3.500" fill="#999"/><path d="M3 14c1-5 11-5 12 0-3 4-9 4-12 0z" fill="#999"/></svg></button>
            <p>세 모서리 사이에 직사각형 면을 그립니다.</p>
            <label for="measure">측면</label>
            <input type="text" id="measure">
        </footer>
    </div>
</body>
</html>
```

FILE: styles.css
```css
* {
    box-sizing: border-box;
}
body {
    margin: 0;
    padding: 26px 0;
    height: 100vh;
    display: flex;
    background: #1b1b1b;
    color: #1c1c24;
    font-family: "Noto Sans", "Noto Sans CJK KR", sans-serif;
    font-size: 15px;
    font-weight: 350;
    overflow: hidden;
}
h1, h2, h3, p, ul {
    margin: 0;
    padding: 0;
    font-weight: inherit;
}
ul {
    list-style: none;
}
button {
    margin: 0;
    padding: 0;
    border: none;
    background: none;
    color: inherit;
    font: inherit;
}
input, select {
    margin: 0;
    color: inherit;
    font: inherit;
    border-radius: 0;
}
svg {
    display: block;
}
.sprite {
    position: absolute;
    width: 0;
    height: 0;
}
.flip {
    transform: rotate(180deg);
}
.app {
    flex: 1;
    min-width: 0;
    display: flex;
    flex-direction: column;
    background: #f9f9f9;
}

/* Title bar */
.titlebar {
    display: flex;
    align-items: center;
    height: 28px;
    padding: 0 14px 0 3px;
    background: #fff;
}
.logo {
    width: 18px;
    height: 20px;
}
.titlebar h1 {
    flex: 1;
    margin-left: 6px;
    font-size: 16px;
    line-height: 28px;
}
.window-buttons {
    display: flex;
    gap: 22px;
}
.window-buttons button {
    width: 36px;
    height: 28px;
    display: grid;
    place-items: center;
}
.window-buttons svg {
    width: 12px;
    height: 12px;
}

/* Menus */
.menubar {
    display: flex;
    align-items: center;
    height: 26px;
    background: #fff;
}
.menubar > button, .menu-open > button {
    height: 24px;
    padding: 0 7px;
    font-size: 16px;
    line-height: 22px;
    white-space: nowrap;
    border: 1px solid transparent;
}
.menubar > button:first-child {
    padding-left: 6px;
}
.menu-open > .active {
    background: #d5ebff;
    border-color: #b0d5f5;
}
.menu-open {
    position: relative;
    z-index: 5;
}
.menu {
    position: absolute;
    top: 24px;
    left: 0;
    width: 157px;
    padding: 2px;
    background: #f9f9fb;
    border: 1px solid #ccc;
    box-shadow: 3px 3px 2px #7f7f7f;
}
.menu li {
    position: relative;
}
.menu button {
    display: flex;
    align-items: center;
    width: 100%;
    height: 24px;
    padding: 0 10px 0 34px;
    font-size: 16px;
    line-height: 24px;
    text-align: left;
    white-space: nowrap;
}
.menu .active {
    background: #9fd2ff;
}
.more {
    width: 7px;
    height: 7px;
    margin-left: auto;
    border: solid #333;
    border-width: 1px 1px 0 0;
    transform: rotate(45deg);
}
.divider {
    margin-top: 3px;
    padding-top: 3px;
    border-top: 1px solid #d8d8d8;
}
.submenu {
    top: -3px;
    left: 149px;
    width: 207px;
}
.menu kbd {
    width: 20px;
    margin-left: auto;
    font: inherit;
}
.menu .checked {
    padding-left: 0;
}
.check {
    width: 24px;
    height: 24px;
    margin-right: 10px;
    background: #9fd2ff;
}
.pointer {
    position: absolute;
    top: 101px;
    left: 199px;
    width: 12px;
    height: 20px;
}

/* Toolbars */
.toolbars {
    display: flex;
    height: 46px;
    background: #fafafa;
    border-top: 1px solid #eee;
}
.toolbar {
    display: flex;
    padding: 1px 0 0 10px;
    background: radial-gradient(circle, #c4c4c4 1px, transparent 2px) 4px 3px / 3px 4px repeat-y;
    border-right: 2px solid #c8c8c8;
}
.tool {
    display: grid;
    place-items: center;
    width: 42px;
    height: 42px;
}
.tool svg {
    width: 32px;
    height: 32px;
}
.tool.on {
    background: #cde6fb;
    border: 1px solid #a9d0f2;
}
.a1 {
    font-family: "Liberation Serif", serif;
    font-size: 14px;
    font-weight: normal;
}
.mark {
    font-family: "Liberation Sans", sans-serif;
    font-size: 8px;
    fill: #888;
}
.drop {
    display: grid;
    place-items: center;
    width: 22px;
    height: 38px;
}
.drop svg {
    width: 11px;
    height: 7px;
}
.toolbar hr {
    width: 1px;
    height: 38px;
    margin: 2px 5px 0 2px;
    border: none;
    background: #8c8c8c;
}

/* Workspace */
.workspace {
    flex: 1;
    min-height: 0;
    display: flex;
}
.side {
    width: 88px;
    flex: none;
}
.toolbox {
    display: flex;
    flex-wrap: wrap;
    padding: 10px 0 0 2px;
    background: radial-gradient(circle, #c4c4c4 1px, transparent 2px) 3px 4px / 4px 3px repeat-x #fbfafc;
    border: solid #bdbdbd;
    border-width: 0 1px 1px 0;
}
.toolbox hr {
    width: 80px;
    height: 1px;
    margin: 2px 2px 5px;
    border: none;
    background: #8c8c8c;
}
.viewport {
    flex: 1;
    min-width: 0;
    background: #d6d6d4;
    border: solid #fff;
    border-width: 2px 1px 1px 2px;
    border-top-color: #8a8a8a;
    border-left-color: #8a8a8a;
}
.viewport svg {
    width: 100%;
    height: 100%;
}

/* Tray */
.tray {
    width: 297px;
    margin-left: 5px;
    flex: none;
    display: flex;
    flex-direction: column;
    font-size: 12px;
}
.tray-title {
    display: flex;
    align-items: center;
    height: 26px;
    margin-bottom: 2px;
    padding: 0 4px 0 4px;
    background: linear-gradient(#c6d5e6, #dde8f7);
}
.tray-title h2 {
    flex: 1;
    font-size: 15px;
    line-height: 26px;
}
.tray-title svg {
    width: 10px;
    height: 12px;
}
.tray-title .close {
    width: 12px;
    height: 12px;
    margin-left: 8px;
    background: #cd5c62;
    color: #fff;
    display: grid;
    place-items: center;
}
.tray-body {
    flex: 1;
    min-height: 0;
    display: flex;
}
.panels {
    flex: 1;
    min-width: 0;
    border-right: 1px solid #fff;
}
.panel-head {
    display: flex;
    align-items: center;
    height: 23px;
    margin-bottom: 1px;
    padding: 0 2px 0 9px;
    font-size: 16px;
    line-height: 21px;
    background: linear-gradient(#f3f3f3, #bebebe);
    border: 1px solid #bbb;
}
.panel-head i {
    margin: 0 9px 0 1px;
    border: solid transparent;
    border-width: 4px 0 4px 8px;
    border-left-color: #111;
}
.panel-head.open i {
    margin: 0 8px 0 0;
    border: solid transparent;
    border-width: 8px 5px 0;
    border-top-color: #111;
}
.panel-head button {
    display: grid;
    place-items: center;
    width: 16px;
    height: 16px;
    margin-left: auto;
    background: #f0f0f0;
    border: 1px solid #aaa;
    outline: 1px solid #f8f8f8;
}
.panel-head svg {
    width: 10px;
    height: 10px;
}
.details svg {
    width: 12px;
    height: 18px;
}
.info {
    display: flex;
    justify-content: space-between;
    align-items: flex-start;
    height: 180px;
    padding: 6px 8px 0 2px;
}
.info p {
    width: 246px;
    height: 25px;
    padding-left: 9px;
    line-height: 18px;
    font-weight: normal;
    border-bottom: 1px solid #aaa;
}
.current {
    display: flex;
    padding: 1px 2px 4px;
    border-bottom: 1px solid #aaa;
}
.preview {
    width: 77px;
    height: 86px;
    border: 1px solid #aaa;
}
.name {
    width: 161px;
    height: 22px;
    margin-left: 3px;
    padding: 0 4px;
    background: #f9f9f9;
    color: #8c8791;
    border: 1px solid;
    border-color: #777 #fff #fff #777;
}
.current-icons {
    display: flex;
    flex-direction: column;
    align-items: center;
    margin-left: auto;
    padding-top: 4px;
}
.create {
    margin: 10px 0 6px;
}
.create svg {
    width: 22px;
    height: 22px;
}
.default svg {
    width: 26px;
    height: 26px;
}
.tabs {
    display: flex;
    align-items: flex-end;
    height: 30px;
    padding-right: 4px;
}
.tab {
    height: 20px;
    width: 47px;
    padding-left: 5px;
    text-align: left;
    line-height: 18px;
    border: solid #ddd;
    border-width: 1px 2px 0 0;
    border-right-color: #777;
}
.tab.selected {
    height: 22px;
    width: 50px;
    padding-left: 7px;
}
.dropper {
    margin: 0 0 5px auto;
}
.dropper svg {
    width: 20px;
    height: 20px;
}
.browse {
    display: flex;
    align-items: center;
    height: 36px;
    padding: 3px 4px 0 8px;
    border-bottom: 1px solid #888;
}
.browse button {
    margin: 0 11px 5px 0;
}
.browse svg {
    width: 16px;
    height: 16px;
}
.browse .home {
    margin-right: 6px;
}
.browse .home svg {
    width: 20px;
    height: 20px;
}
.browse .combo {
    flex: 1;
    height: 27px;
}
.browse .more-menu {
    margin: 0 0 5px 9px;
}
.browse .more-menu svg {
    width: 18px;
    height: 18px;
}
.combo {
    display: grid;
    background: #fff;
    border: 1px solid;
    border-color: #777 #aaa #aaa #777;
    box-shadow: inset 1px 1px #aaa;
}
.combo select, .combo i {
    grid-area: 1 / 1;
}
.combo select {
    width: 100%;
    padding: 0 4px;
    appearance: none;
    border: none;
    background: none;
}
.combo i {
    display: grid;
    place-items: center;
    justify-self: end;
    width: 21px;
    margin: 1px 0 0;
    background: #f9f9f9;
    border: 1px solid;
    border-color: #eee #777 #777 #ddd;
    pointer-events: none;
}
.combo svg {
    width: 9px;
    height: 5px;
}
.palette {
    display: flex;
    height: 177px;
    margin-bottom: 4px;
    border-bottom: 4px solid #f9f9f9;
    box-shadow: 0 1px #777, 0 3px #ccc;
}
.swatches {
    flex: 1;
    display: grid;
    grid-template-columns: repeat(3, 62px);
    grid-auto-rows: 62px;
    gap: 2px;
    padding: 2px 3px 0;
    background: #fff;
    overflow: hidden;
}
.swatches button {
    padding: 1px;
    background-clip: content-box;
    border: 1px solid #aaa;
}
.s1 { background-color: #fed3d3; }
.s2 { background-color: #fca7a7; }
.s3 { background-color: #f87878; }
.s4 { background-color: #f64d4d; }
.s5 { background-color: #f01e20; }
.s6 { background-color: #d81618; }
.s7 { background-color: #a6191b; }
.s8 { background-color: #78191c; }
.s9 { background-color: #fde0d7; }
.scrollbar {
    display: flex;
    flex-direction: column;
    align-items: center;
    width: 20px;
    padding: 6px 0 5px;
}
.scrollbar svg {
    width: 11px;
    height: 10px;
}
.scrollbar span {
    width: 19px;
    height: 21px;
    margin: 6px 0 auto;
    background: #d6d6d6;
}

/* Shadow settings */
.shadows {
    padding: 5px 1px 0 4px;
}
.row {
    display: flex;
    align-items: flex-start;
    height: 35px;
    padding-right: 3px;
}
.row > label {
    width: 49px;
    padding-left: 1px;
    line-height: 20px;
}
.row > .combo, .row > .spin {
    width: 82px;
    height: 27px;
    margin-left: auto;
    font-size: 13px;
    font-weight: normal;
}
.cube {
    width: 49px;
    padding: 1px 0 0 5px;
}
.cube svg {
    width: 26px;
    height: 26px;
}
.row > .cube + .combo {
    width: 127px;
    height: 24px;
    margin-left: 0;
}
.row > .details {
    margin: 4px 4px 0 auto;
}
.slider {
    width: 123px;
}
.ruled {
    height: 49px;
    padding-top: 12px;
    border-top: 1px solid #aaa;
}
.slider input {
    display: block;
    width: 122px;
    height: 8px;
    margin: 1px 0 0;
    appearance: none;
    background: none;
}
.slider .gray {
    width: 120px;
    margin-top: 7px;
}
.slider input::-webkit-slider-runnable-track {
    height: 8px;
    border: 1px solid;
    border-color: #999 #fff #fff #999;
}
.slider input::-webkit-slider-thumb {
    appearance: none;
    width: 4px;
    height: 13px;
    margin-top: -1px;
    background: #fafafa;
    box-shadow: 1px 1px #999;
}
.time::-webkit-slider-runnable-track {
    background: linear-gradient(90deg, #fff, #aecbe2 25%, #7e95ea 52%, #6d7bf0 70%, #40469a 85%, #1c1d30);
}
.date::-webkit-slider-runnable-track {
    background: linear-gradient(90deg, #fff, #ffd76a 25%, #f7b035 38%, #e8352a 66%, #ec6b70 80%, #fff);
}
.gray::-webkit-slider-runnable-track {
    background: linear-gradient(90deg, #111, #fff);
}
.ticks {
    display: flex;
    justify-content: space-between;
    font-family: "Liberation Sans", "Noto Sans CJK KR", sans-serif;
    font-size: 10px;
    font-weight: normal;
    line-height: 14px;
}
.months {
    padding: 0 2px;
}
.spin {
    display: flex;
    background: #fff;
    border: 1px solid;
    border-color: #777 #ddd #ddd #777;
    box-shadow: inset 1px 1px #aaa;
}
.spin input {
    flex: 1;
    min-width: 0;
    padding: 0 0 4px 4px;
    border: none;
    background: none;
}
.spin > span {
    display: flex;
    flex-direction: column;
    width: 20px;
    margin: 1px 0;
}
.spin button {
    flex: 1;
    display: grid;
    place-items: center;
    background: #f9f9f9;
    border: 1px solid;
    border-color: #ddd #888 #888 #ddd;
}
.spin svg {
    width: 6px;
    height: 4px;
}
.sun {
    display: flex;
    align-items: center;
    gap: 7px;
    padding: 10px 0 0 70px;
    border-top: 1px solid #aaa;
}
.sun input {
    width: 15px;
    height: 15px;
    appearance: none;
    background: #fff;
    border: 1px solid;
    border-color: #777 #ccc #ccc #777;
}

/* Status bar */
.statusbar {
    display: flex;
    align-items: center;
    height: 31px;
    padding: 2px 6px 0;
}
.statusbar button {
    width: 18px;
    margin-right: 17px;
}
.statusbar svg {
    width: 18px;
    height: 18px;
}
.statusbar p {
    flex: 1;
    padding-left: 10px;
    margin-left: -4px;
    font-size: 17px;
    line-height: 16px;
    border-left: 1px solid #999;
}
.statusbar label {
    padding: 0 9px 0 10px;
    font-size: 17px;
    line-height: 16px;
    border-left: 1px solid #999;
}
.statusbar input {
    width: 250px;
    height: 23px;
    background: #f9f9fb;
    border: 1px solid #b9c4d8;
}
```
